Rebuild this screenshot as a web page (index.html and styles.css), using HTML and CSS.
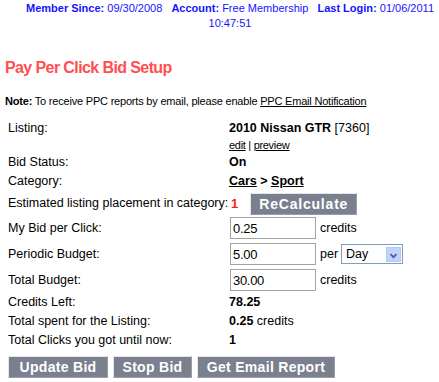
FILE: index.html
```html
<!DOCTYPE html>
<html lang="en">
<head>
    <meta charset="UTF-8">
    <title>Pay Per Click Bid Setup</title>
    <link rel="stylesheet" href="styles.css">
</head>
<body>
    <div class="member-bar">
        <span class="member-item"><b>Member Since:</b> 09/30/2008</span>
        <span class="member-item"><b>Account:</b> Free Membership</span>
        <span class="member-item"><b>Last Login:</b> 01/06/2011</span>
        <span class="login-time">10:47:51</span>
    </div>

    <h1 class="page-title">Pay Per Click Bid Setup</h1>

    <p class="note"><b>Note:</b> To receive PPC reports by email, please enable <a href="#">PPC Email Notification</a></p>

    <form class="bid-form">
        <div class="row tall">
            <div class="label">Listing:</div>
            <div class="value">
                <b>2010 Nissan GTR</b> [7360]
                <div class="small-links"><a href="#">edit</a> | <a href="#">preview</a></div>
            </div>
        </div>
        <div class="row">
            <div class="label">Bid Status:</div>
            <div class="value"><b>On</b></div>
        </div>
        <div class="row">
            <div class="label">Category:</div>
            <div class="value"><b><a href="#">Cars</a> &gt; <a href="#">Sport</a></b></div>
        </div>
        <div class="row placement">
            <div class="label">Estimated listing placement in category:</div>
            <div class="value inline">
                <span class="rank">1</span>
                <button type="button" class="btn recalc">ReCalculate</button>
            </div>
        </div>
        <div class="row field">
            <div class="label">My Bid per Click:</div>
            <div class="value inline"><input type="text" value="0.25"> credits</div>
        </div>
        <div class="row field">
            <div class="label">Periodic Budget:</div>
            <div class="value inline">
                <input type="text" value="5.00"> per
                <span class="select">
                    <span class="select-text">Day</span>
                    <span class="select-arrow">
                        <svg width="15" height="15" viewBox="0 0 15 15"><path d="M4 6 L7.5 9.5 L11 6" fill="none" stroke="#4d6185" stroke-width="2"/></svg>
                    </span>
                </span>
            </div>
        </div>
        <div class="row field">
            <div class="label">Total Budget:</div>
            <div class="value inline"><input type="text" value="30.00"> credits</div>
        </div>
        <div class="row">
            <div class="label">Credits Left:</div>
            <div class="value"><b>78.25</b></div>
        </div>
        <div class="row">
            <div class="label">Total spent for the Listing:</div>
            <div class="value"><b>0.25</b> credits</div>
        </div>
        <div class="row">
            <div class="label">Total Clicks you got until now:</div>
            <div class="value"><b>1</b></div>
        </div>
        <div class="actions">
            <button type="button" class="btn btn-update">Update Bid</button>
            <button type="button" class="btn btn-stop">Stop Bid</button>
            <button type="button" class="btn btn-report">Get Email Report</button>
        </div>
    </form>
</body>
</html>
```

FILE: styles.css
```css
body {
    font-family: 'Liberation Sans', Arial, sans-serif;
    font-size: 12.5px;
    color: #000;
    background-color: #fff;
    margin: 0;
    padding: 0 5px;
}

a {
    color: #000;
}

.member-bar {
    color: #1414ff;
    font-size: 11px;
    line-height: 15px;
    text-align: center;
    padding: 1px 0 0 16px;
    margin-right: -5px;
}

.member-item {
    margin: 0 3px;
}

.page-title {
    color: #ff4f4f;
    font-size: 16px;
    letter-spacing: -0.6px;
    margin: 27px 0 0;
    line-height: 19px;
}

.note {
    font-size: 11px;
    letter-spacing: -0.2px;
    margin: 17px 0 0;
    line-height: 14px;
}

.bid-form {
    margin-top: 11px;
    padding-left: 3px;
}

.row {
    display: grid;
    grid-template-columns: 221px auto;
    line-height: 19px;
}

.row.tall {
    padding-bottom: 1px;
}

.small-links {
    font-size: 11px;
    letter-spacing: -0.3px;
    line-height: 14px;
}

.inline {
    display: flex;
    align-items: center;
}

.placement {
    height: 23px;
    align-items: center;
    margin-top: 1px;
}

.rank {
    color: #ff1a1a;
    font-weight: bold;
    font-size: 13px;
    margin: 0 12px 0 2px;
}

.field {
    height: 26px;
    align-items: center;
}

input {
    width: 80px;
    height: 16px;
    padding: 2px;
    border: 1px solid #a3a3a3;
    font-family: 'Liberation Sans', Arial, sans-serif;
    font-size: 13px;
    letter-spacing: -0.3px;
    margin: 0 4px 0 1px;
}

.select {
    display: inline-flex;
    align-items: center;
    width: 60px;
    height: 18px;
    border: 1px solid #7f9db9;
    margin-left: 3px;
}

.select-text {
    flex: 1;
    padding-left: 4px;
}

.select-arrow {
    width: 15px;
    height: 15px;
    margin-right: 1px;
    background-color: #c1d3fb;
    border: 1px solid #b7c8ee;
    box-sizing: border-box;
    display: flex;
}

.btn {
    background-color: #7b808f;
    color: #fff;
    font-family: 'Liberation Sans', Arial, sans-serif;
    font-size: 14px;
    font-weight: bold;
    letter-spacing: 0.3px;
    height: 22px;
    padding: 0;
    border: 1px solid;
    border-color: #e6e6ea #9a9ea8 #9a9ea8 #e6e6ea;
    cursor: pointer;
}

.recalc {
    width: 107px;
    letter-spacing: 0.8px;
}

.btn-update {
    width: 100px;
}

.btn-stop {
    width: 79px;
}

.btn-report {
    width: 138px;
}

.actions {
    display: flex;
    gap: 5px;
    margin-top: 6px;
}
```
